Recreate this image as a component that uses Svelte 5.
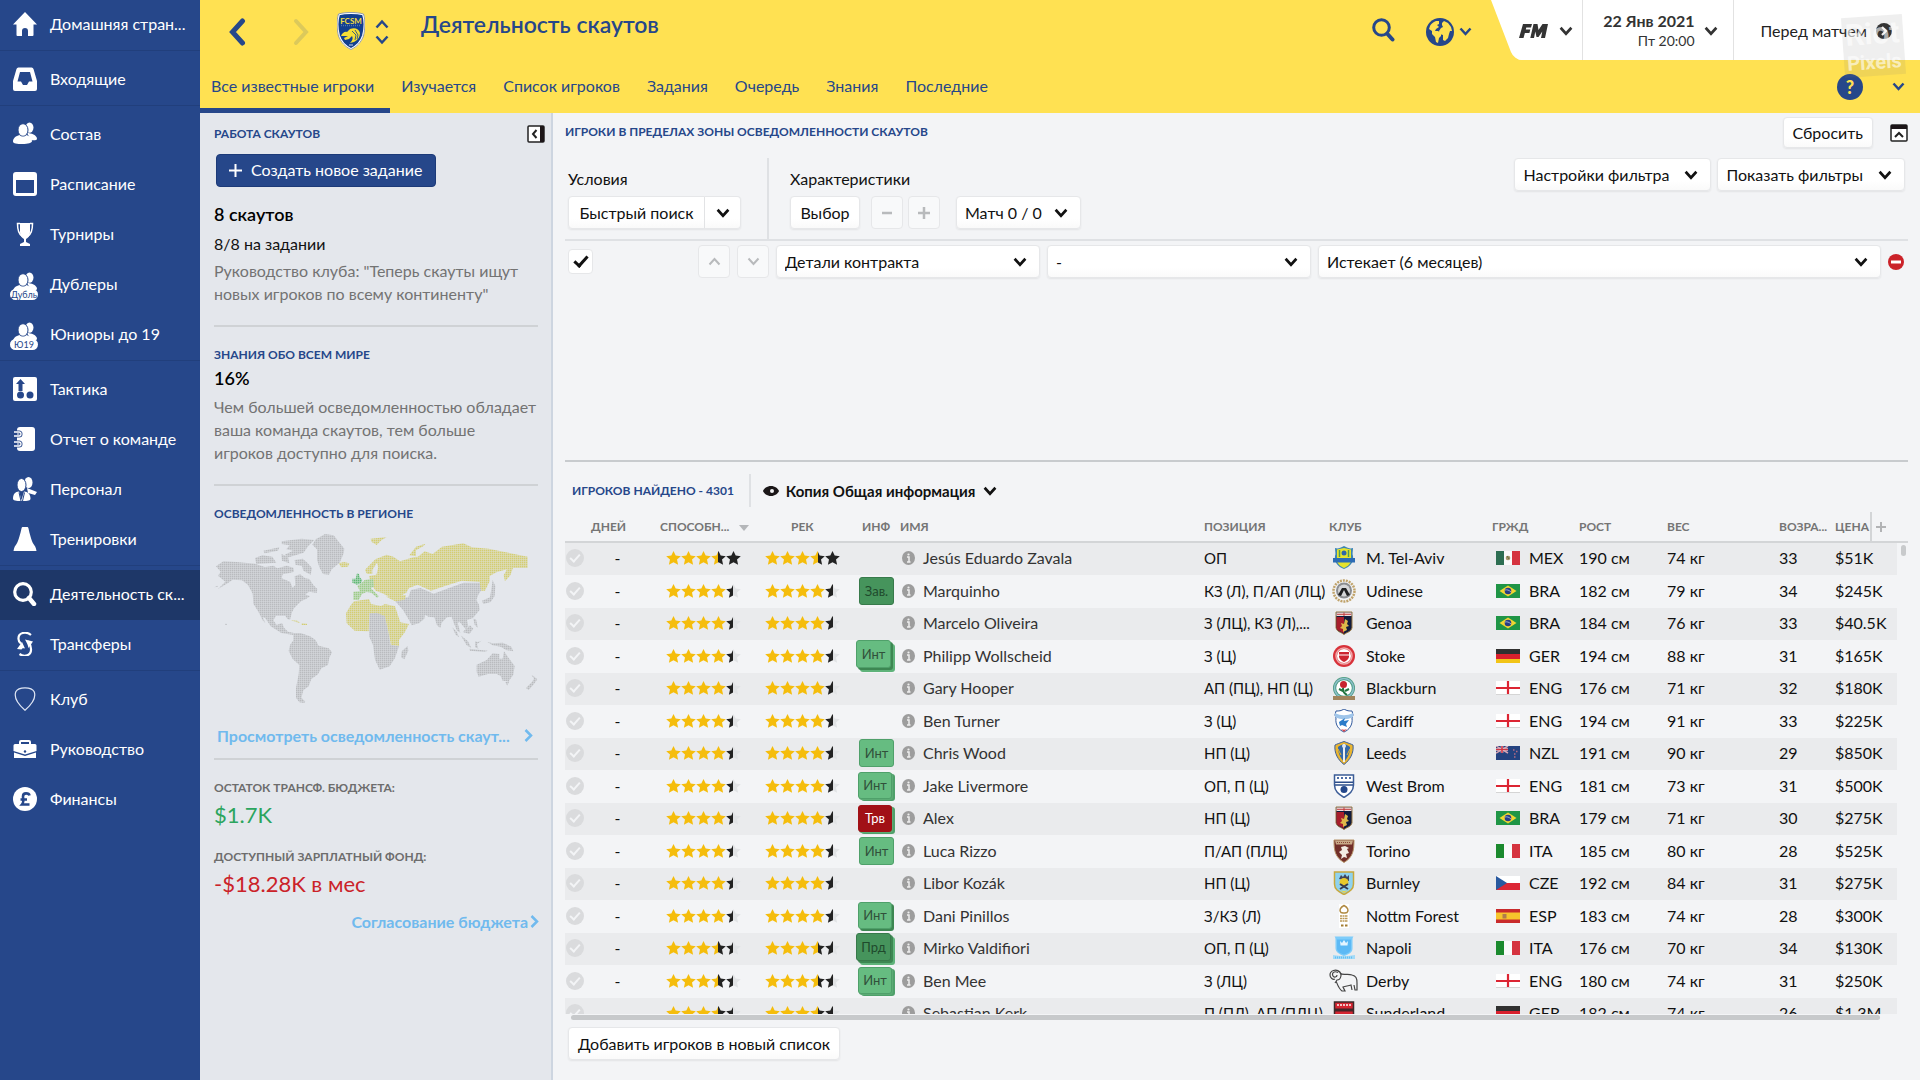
<script>
  const menu = [
    [{ icon: 'home', label: 'Домашняя стран...' }],
    [{ icon: 'inbox', label: 'Входящие' }],
    [
      { icon: 'squad', label: 'Состав' },
      { icon: 'calendar', label: 'Расписание' },
      { icon: 'cup', label: 'Турниры' },
      { icon: 'squad', label: 'Дублеры', tag: 'Дубль' },
      { icon: 'squad', label: 'Юниоры до 19', tag: 'Ю19' }
    ],
    [
      { icon: 'tactics', label: 'Тактика' },
      { icon: 'report', label: 'Отчет о команде' },
      { icon: 'staff', label: 'Персонал' },
      { icon: 'cone', label: 'Тренировки' }
    ],
    [
      { icon: 'search', label: 'Деятельность ск...', active: true },
      { icon: 'transfer', label: 'Трансферы' }
    ],
    [
      { icon: 'shield', label: 'Клуб' },
      { icon: 'case', label: 'Руководство' },
      { icon: 'pound', label: 'Финансы' }
    ]
  ];

  const tabs = ['Все известные игроки', 'Изучается', 'Список игроков', 'Задания', 'Очередь', 'Знания', 'Последние'];
  let tab = $state(tabs[0]);

  const players = [
    { name: 'Jesús Eduardo Zavala', stars: 'a', pos: 'ОП', club: 'M. Tel-Aviv', nat: 'MEX', h: 190, w: 74, age: 33, price: '$51K' },
    { name: 'Marquinho', stars: 'b', tag: 'Зав.', look: 'dark', pos: 'КЗ (Л), П/АП (ЛЦ)', club: 'Udinese', nat: 'BRA', h: 182, w: 79, age: 34, price: '$245K' },
    { name: 'Marcelo Oliveira', stars: 'b', pos: 'З (ЛЦ), КЗ (Л),...', club: 'Genoa', nat: 'BRA', h: 184, w: 76, age: 33, price: '$40.5K' },
    { name: 'Philipp Wollscheid', stars: 'b', tag: 'Инт', look: 'stack3', pos: 'З (Ц)', club: 'Stoke', nat: 'GER', h: 194, w: 88, age: 31, price: '$165K' },
    { name: 'Gary Hooper', stars: 'b', pos: 'АП (ПЦ), НП (Ц)', club: 'Blackburn', nat: 'ENG', h: 176, w: 71, age: 32, price: '$180K' },
    { name: 'Ben Turner', stars: 'b', pos: 'З (Ц)', club: 'Cardiff', nat: 'ENG', h: 194, w: 91, age: 33, price: '$225K' },
    { name: 'Chris Wood', stars: 'b', tag: 'Инт', look: '', pos: 'НП (Ц)', club: 'Leeds', nat: 'NZL', h: 191, w: 90, age: 29, price: '$850K' },
    { name: 'Jake Livermore', stars: 'b', tag: 'Инт', look: 'stack2', pos: 'ОП, П (Ц)', club: 'West Brom', nat: 'ENG', h: 181, w: 73, age: 31, price: '$500K' },
    { name: 'Alex', stars: 'b', tag: 'Трв', look: 'red stack2', pos: 'НП (Ц)', club: 'Genoa', nat: 'BRA', h: 179, w: 71, age: 30, price: '$275K' },
    { name: 'Luca Rizzo', stars: 'b', tag: 'Инт', look: '', pos: 'П/АП (ПЛЦ)', club: 'Torino', nat: 'ITA', h: 185, w: 80, age: 28, price: '$525K' },
    { name: 'Libor Kozák', stars: 'b', pos: 'НП (Ц)', club: 'Burnley', nat: 'CZE', h: 192, w: 84, age: 31, price: '$275K' },
    { name: 'Dani Pinillos', stars: 'b', tag: 'Инт', look: 'stack2d', pos: 'З/КЗ (Л)', club: 'Nottm Forest', nat: 'ESP', h: 183, w: 74, age: 28, price: '$300K' },
    { name: 'Mirko Valdifiori', stars: 'c', tag: 'Прд', look: 'dark stack3', pos: 'ОП, П (Ц)', club: 'Napoli', nat: 'ITA', h: 176, w: 70, age: 34, price: '$130K' },
    { name: 'Ben Mee', stars: 'c', tag: 'Инт', look: 'stack2', pos: 'З (ЛЦ)', club: 'Derby', nat: 'ENG', h: 180, w: 74, age: 31, price: '$250K' },
    { name: 'Sebastian Kerk', stars: 'c', pos: 'П (ПЛ), АП (ПЛЦ)', club: 'Sunderland', nat: 'GER', h: 182, w: 74, age: 26, price: '$1.3M' }
  ];

  // gold up to the first value, black up to the second, pale after it
  const ratings = { a: [3.5, 5], b: [4, 4.5], c: [3.5, 4.5] };
</script>

{#snippet chevron(w = 13, stroke = 2.5)}
  <svg class="chev" width={w} height={w - 4} viewBox="0 0 13 9" aria-hidden="true">
    <path d="M1.5 1.5 6.5 7l5-5.5" fill="none" stroke="currentColor" stroke-width={stroke} />
  </svg>
{/snippet}

{#snippet people()}
  <ellipse cx="16.5" cy="5.6" rx="4" ry="5.2" />
  <path d="M14 11c4 0 10 2 10 6 0 1.500-4 1.500-6 1z" />
  <ellipse cx="10" cy="8" rx="5" ry="6.300" stroke="#26478a" />
  <path d="M0 19.500c0-3.500 3-5.500 6.500-6.500 2 2 5 2 7 0 3 1 5.500 3 5.500 6 0 2-4 3-9.500 3S0 21.500 0 19.500z" />
{/snippet}

{#snippet menuIcon(name)}
  <svg width="24" height="24" viewBox="0 0 24 24" fill="#fff" aria-hidden="true">
    {#if name === 'home'}
      <path d="M12 0 24 12.500h-3.500V23a1 1 0 0 1-1 1H15v-5a3 3 0 0 0-6 0v5H4.500a1 1 0 0 1-1-1V12.500H0z" />
    {:else if name === 'inbox'}
      <path fill-rule="evenodd" d="M5.500.5h13a2 2 0 0 1 2 1.500L24 14v8a2 2 0 0 1-2 2H2a2 2 0 0 1-2-2v-8L3.500 2a2 2 0 0 1 2-1.500zM7 5 4.500 14.500H8l2 3.500h4l2-3.500h3.500L17 5z" />
    {:else if name === 'squad'}
      {@render people()}
    {:else if name === 'calendar'}
      <path fill-rule="evenodd" d="M3 0h18a3 3 0 0 1 3 3v18a3 3 0 0 1-3 3H3a3 3 0 0 1-3-3V3a3 3 0 0 1 3-3zm0 8v13h18V8z" />
    {:else if name === 'cup'}
      <path d="M7 1h10v9c0 4-2 6-4 7v3l4 2v2H7v-2l4-2v-3c-2-1-4-3-4-7z" />
      <path d="M7 1.500H4.500C4.500 8 5.500 12 9 14M17 1.500h2.500C19.500 8 18.500 12 15 14" fill="none" stroke="#fff" stroke-width="1.500" />
    {:else if name === 'tactics'}
      <rect width="24" height="24" rx="2" />
      <path d="M7.500 2 12 7H9.500v7h-4V7H3z" fill="#26478a" />
      <circle cx="7.500" cy="18" r="3.500" fill="#26478a" /><circle cx="17" cy="18" r="3.500" fill="#26478a" />
    {:else if name === 'report'}
      <path d="M7 0h12a3 3 0 0 1 3 3v18a3 3 0 0 1-3 3H7c-2 0-3-1-3-3V3c0-2 1-3 3-3z" />
      <path d="M1 5h5a1 1 0 0 1 0 4H1M1 15h5a1 1 0 0 1 0 4H1" stroke="#26478a" stroke-width="3" fill="none" />
      <path d="M1 5h5a1 1 0 0 1 0 4H1M1 15h5a1 1 0 0 1 0 4H1" stroke="#fff" stroke-width="1.300" fill="none" />
    {:else if name === 'staff'}
      <ellipse cx="15.500" cy="5.500" rx="4" ry="5.500" />
      <path d="m14 11 10 4-2 3-7-2z" />
      <ellipse cx="8.500" cy="8" rx="4.500" ry="6.500" stroke="#26478a" />
      <path d="M6 14.500 8.500 23 11 14.500c4 0 6.500 3 6.500 7 0 2-2 2.500-8.500 2.500S0 23.500 0 21.500c0-4 2-7 6-7z" />
      <path d="M6 15.500 8 24M11.500 15.500 9.500 24" stroke="#26478a" />
    {:else if name === 'cone'}
      <path d="M10 0h4c1 0 1.300.5 1.500 1.500C16.500 6 18.500 14 20.500 17c1 1.500 2.500 3 3 7H.5c.5-4 2-5.500 3-7 2-3 4-11 5-15.500C8.700.5 9 0 10 0z" />
    {:else if name === 'search'}
      <circle cx="10" cy="10" r="8.300" fill="none" stroke="#fff" stroke-width="3.200" />
      <path d="m16 16 5 6" stroke="#fff" stroke-width="4.500" stroke-linecap="round" />
    {:else if name === 'transfer'}
      <g fill="none" stroke="#fff" stroke-width="2.200">
        <path d="M18 3C13-1 5 .5 5.500 7c0 2 1 3.500 2.500 4.500" /><path d="M6.500 22c5 3.500 12 1.500 11.500-5 0-4-2-6-3-8" />
      </g>
      <path d="m4 17 5-7 3 6.500c-2-.5-3 0-3.500 1zM12 7.500l8 2-4.500 6.500c-.5-3-1.500-5-3.500-8.500z" />
    {:else if name === 'shield'}
      <path d="M12 .8c5 0 8 1.500 9.200 4C23.500 11 18 18 12 23.200 6 18 .5 11 2.800 4.800 4 2.300 7 .8 12 .8z" fill="none" stroke="#dfe6f4" stroke-width="1.200" />
    {:else if name === 'case'}
      <path fill-rule="evenodd" d="M8 3h8a2 2 0 0 1 2 2v2h4a1.500 1.500 0 0 1 1.500 1.500V14L12 17.500.5 14V8.500A1.500 1.500 0 0 1 2 7h4V5a2 2 0 0 1 2-2zm0 2v2h8V5z" />
      <path d="M1 15.500 12 19l11-3.500V21H1z" /><circle cx="12" cy="14.500" r="1.200" fill="#26478a" />
    {:else if name === 'pound'}
      <circle cx="12" cy="12" r="12" />
      <path d="M16.500 8.500C16 6 10 5 10 9.500c0 3 1.500 5-1 8h7.500M7.500 12.500H14" fill="none" stroke="#26478a" stroke-width="2.600" />
    {/if}
  </svg>
{/snippet}

{#snippet stars(kind)}
  <svg width="75" height="14" viewBox="0 0 75 14" role="img" aria-label="{ratings[kind][0]} из 5">
    {#each [0, 1, 2, 3, 4] as n}
      <path transform="translate({n * 15} 0)" fill="url(#rate-{kind}-{n})" d="M7.500 0l2.200 4.600 5.100.6-3.800 3.400 1.100 5.200-4.600-2.600-4.600 2.600 1.100-5.200L.2 5.200l5.100-.6z" />
    {/each}
  </svg>
{/snippet}

{#snippet crest(club)}
  <svg width="30" height="24" viewBox="0 0 30 24" aria-hidden="true">
    {#if club === 'M. Tel-Aviv'}
      <path d="M6 2c3 1 5 0 9-2 4 2 6 3 9 2 0 3-1 6 0 8 1 6-3 11-9 13C9 21 5 16 6 10c1-2 0-5 0-8z" fill="#3b84b4" />
      <path d="M8 3.500 15 2l7 1.500V15c-1 4-4 5.500-7 7-3-1.500-6-3-7-7z" fill="#e6e32d" />
      <path d="M10.500 4v7M19.500 4v7" stroke="#4b9a58" stroke-width="1.500" /><circle cx="15" cy="7" r="2.500" fill="#2d67a8" />
      <path d="M4 12h22v4.500H4z" fill="#2c6cb5" />
    {:else if club === 'Udinese'}
      <circle cx="15" cy="12" r="10.500" fill="none" stroke="#c0a36b" stroke-width="2.500" stroke-dasharray="2 1" />
      <circle cx="15" cy="11.500" r="8" fill="#8b8d90" /><circle cx="15" cy="11.500" r="6" fill="#d5d6d8" />
      <path d="m9 16 4-7h4l4 7-3 1-3-6-3 6z" fill="#1f2022" />
    {:else if club === 'Genoa'}
      <path d="M7 1h16v16c-1 4-5 4-8 6.500C12 21 8 21 7 17z" fill="#111c3d" stroke="#9c7b45" />
      <path d="M7.500 6H15v16.500C12 20 8 20 7.500 17z" fill="#a81e2b" /><path d="M7.500 1.500h15V5h-15z" fill="#efdede" />
      <path d="M8 3.300h14M15 1.500V5" stroke="#c43a3a" />
      <path d="m16 8 3 2-1 3 2 2-3 1 1 3-4 2v-3l-3-1 2-2-1-3 3 1z" fill="#dfb94a" />
    {:else if club === 'Stoke'}
      <circle cx="15" cy="12" r="11" fill="#d8323a" /><circle cx="15" cy="12" r="8" fill="none" stroke="#f0a9aa" stroke-width="1.500" />
      <circle cx="15" cy="12" r="7" fill="#fff" /><path d="M10 8h10v5c-1 3-3 4-5 5-2-1-4-2-5-5z" fill="#cd2530" /><path d="M10 11h10" stroke="#fff" />
    {:else if club === 'Blackburn'}
      <circle cx="15" cy="12" r="11" fill="#4a9b7f" /><circle cx="15" cy="12" r="9.500" fill="none" stroke="#8fc0ce" stroke-width="1.500" />
      <circle cx="15" cy="12" r="7.800" fill="#fff" /><circle cx="14.500" cy="8.500" r="3.500" fill="#c9242f" />
      <path d="M14 12c0 4 1 5 4 7M16 15l4-2M14 15l-4-2" stroke="#22763f" stroke-width="2" fill="none" /><path d="M4 20h22v4H4z" fill="#a1855c" />
    {:else if club === 'Cardiff'}
      <path d="M7 2c3 0 5 0 8-2 3 2 5 2 8 2l1 4-1 3c1 7-3 12-8 14C10 21 6 16 7 9L6 6z" fill="#fff" stroke="#31599d" />
      <path d="M6 4c6 3 12 3 18 0v4c-6 3-12 3-18 0z" fill="#9fc5ea" /><path d="m10 13 6-4-1 3 5-1-3 4 1 3-5-2-2 1z" fill="#2b7cc9" />
      <path d="M12 20c2 1 4 1 6 0l-3 3z" fill="#d14a52" />
    {:else if club === 'Leeds'}
      <path d="M15 .5C19 2 22 3 24 4c1 8-3 15-9 19.500C9 19 5 12 6 4c2-1 5-2 9-3.500z" fill="#eab52f" stroke="#3e5f96" />
      <path d="M15 3c3 1 5 2 6 3 0 6-2 10-6 15C11 16 9 12 9 6c1-1 3-2 6-3z" fill="#3468a9" />
      <path d="M15 3v18" stroke="#eee" stroke-width="2" /><circle cx="15" cy="5" r="2" fill="#dbe7f5" /><path d="m9 8 3 6M21 8l-3 6" stroke="#eab52f" />
    {:else if club === 'West Brom'}
      <path d="M5.500 1h19v10c0 6-4 9-9.500 12.500C9.500 20 5.500 17 5.500 11z" fill="#fff" stroke="#3b5c97" stroke-width="1.500" />
      <path d="M8 4h14" stroke="#4c6da7" stroke-width="2" stroke-dasharray="2 2" /><path d="M6 8.300h18M6 11h18" stroke="#2e4f8b" stroke-width="1.500" /><circle cx="15" cy="15.500" r="3.500" fill="#25488b" />
    {:else if club === 'Torino'}
      <path d="M5 1h20c0 11-1 17-10 22.500C6 18 5 12 5 1z" fill="#722f2a" stroke="#b79468" /><path d="M6 1.500h18l-1 4H7z" fill="#c8a987" /><path d="M8 3.500h14" stroke="#8b4639" stroke-dasharray="1 1" />
      <path d="m12 8 4-1 4 2-2 1 2 4-3 1 1 4-3-1-3 2 1-4-3-3 3-2z" fill="#f3ece4" />
    {:else if club === 'Burnley'}
      <path d="M5.500 1h19v12c0 6-5 8-9.500 10.500C10.500 21 5.500 19 5.500 13z" fill="#8ed2ef" stroke="#c8a83c" stroke-width="1.500" />
      <path d="m10 8 2-4 2 2 2-3 2 3 2-2v6z" fill="#40455c" /><circle cx="15" cy="11.500" r="4.500" fill="#e8ca2b" />
      <path d="m11 13 8 5m0-5-8 5" stroke="#333c55" stroke-width="2" /><path d="M8 17c4 4 10 4 14 0l-7 5z" fill="#e7d34b" />
    {:else if club === 'Nottm Forest'}
      <path d="M10 0h10v24H10z" fill="#fff" /><path d="M15 1.500c4 2 5 5 3 7l-2 .5h-2l-2-.5c-2-2-1-5 3-7z" fill="none" stroke="#b08a42" stroke-width="1.500" />
      <path d="M11 12h8M11 14.500h8M11 17h8" stroke="#ba9856" stroke-width="1.500" stroke-dasharray="2 .5" /><path d="M12 21.500h2.500m1.500 0h2.500" stroke="#a37d32" stroke-width="2" />
    {:else if club === 'Napoli'}
      <path d="M5.500.5h19c-1 1-1 2-1 4v8c0 4-4 6-8.500 7.500C10.500 18.500 6.500 16 6.500 12V4.500c0-2 0-3-1-4z" fill="#7dccfa" />
      <path d="M8 3.500h14v9c0 3-3 5-7 6-4-1-7-3-7-6z" fill="#5cb9f5" /><path d="M11.500 9.500 11 5l2 2 2-3 2 3 2-2-.5 4.500z" fill="#e5f5ff" />
      <path d="M4 19c7 1.500 15 1.500 22 0v4H4z" fill="#a2daf8" /><path d="M6 21.500h18" stroke="#63bff3" stroke-width="2" stroke-dasharray="1 1" />
    {:else if club === 'Derby'}
      <g fill="none" stroke="#444" stroke-width="1.200">
        <path d="M11 3C7-.5 1 1.500 1 6c0 3 3 5 5 4M9 3.500C5 1.500 2.500 4 4 7c1 2 4 1 4-1M9 2c5 2 3 9-1 9l-2 3M11 4c3 3 7 0 12 2 4 1 5 3 5 8v7h-2l-1-5M7 12c2 5 3 8 6 10h3l-2-4c3-1 5-1 8-2l1 5" />
      </g>
    {:else}
      <path d="M5.500 1h19v14c0 5-4 7-9.500 9-5.500-2-9.500-4-9.500-9z" fill="#d52531" stroke="#3d2929" stroke-width="1.500" />
      <path d="M8 4h14" stroke="#f2c4c4" stroke-width="2" stroke-dasharray="2 1" /><path d="M6 7.500h18v3H6z" fill="#432629" />
    {/if}
  </svg>
{/snippet}

{#snippet flag(code)}
  <svg width="24" height="14" viewBox="0 0 24 14" aria-hidden="true">
    {#if code === 'MEX' || code === 'ITA'}
      <path d="M0 0h24v14H0z" fill="#fafafa" /><path d="M0 0h8v14H0z" fill={code === 'MEX' ? '#2d6e52' : '#1b8a2e'} /><path d="M16 0h8v14h-8z" fill="#d5333f" />
      {#if code === 'MEX'}<circle cx="12" cy="7" r="2.300" fill="#a9966c" /><path d="m11 5 2 3" stroke="#5f7040" />{/if}
    {:else if code === 'BRA'}
      <path d="M0 0h24v14H0z" fill="#1f9546" /><path d="m12 1.500 8.500 5.500-8.500 5.500L3.500 7z" fill="#f1d531" /><circle cx="12" cy="7" r="3.300" fill="#283c86" /><path d="M9 6c2-.5 4 0 6 2" stroke="#c8d4ea" fill="none" stroke-width=".7" />
    {:else if code === 'GER'}
      <path d="M0 0h24v5H0z" fill="#303030" /><path d="M0 5h24v5H0z" fill="#d9202d" /><path d="M0 10h24v4H0z" fill="#f2c417" />
    {:else if code === 'ENG'}
      <path d="M0 0h24v14H0z" fill="#fff" /><path d="M0 7h24M12 0v14" stroke="#dc2533" stroke-width="2.200" /><path d="M0 13.500h24" stroke="#d5d5d5" />
    {:else if code === 'NZL'}
      <path d="M0 0h24v14H0z" fill="#24427f" /><path d="m0 0 12 7M12 0 0 7" stroke="#d8a5b4" stroke-width="1.500" /><path d="M0 3.500h12M6 0v7" stroke="#f0dfe6" stroke-width="2.500" /><path d="M0 3.500h12M6 0v7" stroke="#cf3442" stroke-width="1.600" />
      <path d="M17 4h1.500M20 5.500h1.500M18 8h1.500M18 11h1.500" stroke="#b56c84" stroke-width="1.500" />
    {:else if code === 'CZE'}
      <path d="M0 0h24v7H0z" fill="#fff" /><path d="M0 7h24v7H0z" fill="#dc2735" /><path d="m0 0 11 7-11 7z" fill="#29599f" />
    {:else}
      <path d="M0 0h24v14H0z" fill="#c92b2c" /><path d="M0 3.500h24v7H0z" fill="#f6c52c" /><path d="M6.500 5h4v4.500h-4z" fill="#b07d4b" />
    {/if}
  </svg>
{/snippet}

<svg class="defs" width="0" height="0" aria-hidden="true">
  <defs>
    {#each Object.entries(ratings) as [kind, [gold, black]]}
      {#each [0, 1, 2, 3, 4] as n}
        {@const g = Math.min(1, Math.max(0, gold - n))}
        {@const b = Math.min(1, Math.max(0, black - n))}
        <linearGradient id="rate-{kind}-{n}">
          <stop offset={g} stop-color="#f5bd0c" />
          <stop offset={g} stop-color="#222" />
          <stop offset={b} stop-color="#222" />
          <stop offset={b} stop-color={b < 1 ? '#e1e3e5' : '#222'} />
        </linearGradient>
      {/each}
    {/each}
  </defs>
</svg>

<div class="app">
  <nav class="side" aria-label="Главное меню">
    {#each menu as group}
      <ul>
        {#each group as it}
          <li>
            <a href="#{it.icon}" class:active={it.active}>
              <span class="pic">
                {@render menuIcon(it.icon)}
                {#if it.tag}<span class="tag">{it.tag}</span>{/if}
              </span>
              <span class="text">{it.label}</span>
            </a>
          </li>
        {/each}
      </ul>
    {/each}
  </nav>

  <div class="page">
    <header>
      <div class="top">
        <button class="back" aria-label="Назад">
          <svg width="18" height="28" viewBox="0 0 18 28"><path d="M14.500 3 4.500 14l10 11" fill="none" stroke="currentColor" stroke-width="5" stroke-linecap="round" /></svg>
        </button>
        <button class="fwd" aria-label="Вперед">
          <svg width="18" height="28" viewBox="0 0 18 28"><path d="m4 3 10 11L4 25" fill="none" stroke="currentColor" stroke-width="4" stroke-linecap="round" /></svg>
        </button>
        <svg class="badge" width="28" height="38" viewBox="0 0 28 38" role="img" aria-label="FCSM">
          <path d="M14 1c4 0 8 .3 12 1.500 2 6 1.500 15 0 21C24 30 20 34 14 37 8 34 4 30 2 23.500.5 17.500 0 8.500 2 2.500 6 1.300 10 1 14 1z" fill="#123f8f" stroke="#fff" stroke-width="1.800" />
          <path d="M14 .5c4 0 8 .3 12.500 1.500 2 6 1.500 16 0 22C24 30.500 20 34.500 14 37.500 8 34.500 4 30.500 1.500 24-.1 18-.5 8 1.500 2 6 .8 10 .5 14 .5z" fill="none" stroke="#4c5d80" stroke-width=".6" />
          <text x="14" y="11.500" text-anchor="middle" font-size="8" font-weight="700" fill="#f5dc3c">FCSM</text>
          <path d="M4 13.500h20" stroke="#4d73af" stroke-width="1.500" stroke-dasharray="1 1" />
          <path d="M4 24c1-3 4-5 6-4l3-3c5-2 9 0 10 4 0 4-2 7-6 9l-4 1c3-3 3-5 2-7l-3 3-4 1-1-2 4-2z" fill="#f6de35" />
          <path d="m15 19 4 4-1 5M18 18l3 5-1 4" stroke="#123f8f" fill="none" stroke-width=".8" /><path d="M12 33h4" stroke="#c7d4e9" />
        </svg>
        <button class="step" aria-label="Сменить команду">
          <svg width="14" height="26" viewBox="0 0 14 26"><path d="m1.500 8.500 5.500-6 5.500 6M1.500 17.500l5.500 6 5.500-6" fill="none" stroke="currentColor" stroke-width="2.500" /></svg>
        </button>
        <h1>Деятельность скаутов</h1>
        <button class="find" aria-label="Поиск">
          <svg width="23" height="24" viewBox="0 0 23 24"><circle cx="9.500" cy="9.500" r="7.800" fill="none" stroke="currentColor" stroke-width="3" /><path d="m15.500 16 5 5.500" stroke="currentColor" stroke-width="4" stroke-linecap="round" /></svg>
        </button>
        <button class="world" aria-label="Мир">
          <svg width="28" height="28" viewBox="0 0 28 28">
            <circle cx="14" cy="14" r="14" fill="#26478a" />
            <path d="M4 8c1-2 3-4 6-5l3 0 0 3-2 1 2 2-3 2-1 2 3 0 3 2 0 3-2 2-1 5-2-1-1-5-3-3 0-3-3-2zM16 5l2-2 4 2 3 4 1 4-2 0-1 3-1 4-3 3-2-1 0-5-3-1-1-3 2-3 2-1-1-2z" fill="#ffe152" />
          </svg>
          {@render chevron(13, 2.5)}
        </button>
        <div class="clock">
          <button class="fm" aria-label="FM">
            <svg width="30" height="14" viewBox="0 0 30 14" fill="#333"><path d="M4 0h9l-1 3.500H7.300L6.800 5.500h4.500L10.400 9H5.900L4.500 14H0zM14.500 0h4l1 6 4-6h5.500l-3 14H22l1.300-6.500L19.500 13h-2l-1.200-5.500L15 14h-3.700z" /></svg>
            {@render chevron(14, 2.5)}
          </button>
          <button class="date">
            <span><b>22 Янв 2021</b><small>Пт 20:00</small></span>
            {@render chevron(14, 2.5)}
          </button>
          <button class="next">
            Перед матчем
            <svg width="16" height="16" viewBox="0 0 16 16" aria-hidden="true"><circle cx="8" cy="8" r="8" fill="#2b2b2b" /><path d="m6 4 4 4-4 4" fill="none" stroke="#fff" stroke-width="2.200" /></svg>
          </button>
        </div>
      </div>
      <div class="tabs">
        {#each tabs as t}
          <button class:on={t === tab} onclick={() => (tab = t)}>{t}</button>
        {/each}
        <button class="help" aria-label="Справка">?</button>
        <button class="more" aria-label="Еще">{@render chevron(13, 2.5)}</button>
      </div>
      <div class="mark" aria-hidden="true">Riot<small>Pixels</small></div>
    </header>

    <div class="body">
      <aside>
        <div class="bar">
          <h2>Работа скаутов</h2>
          <button aria-label="Свернуть панель">
            <svg width="18" height="18" viewBox="0 0 18 18"><rect x="1" y="1" width="16" height="16" rx="1" fill="#fff" stroke="#222" stroke-width="1.500" /><path d="M13 1h4v16h-4z" fill="#1c1518" /><path d="M9.500 5 6 9l3.500 4" fill="none" stroke="#222" stroke-width="2" /></svg>
          </button>
        </div>
        <button class="create"><svg width="13" height="13" viewBox="0 0 13 13" aria-hidden="true"><path d="M6.500 0v13M0 6.500h13" stroke="#fff" stroke-width="2" /></svg>Создать новое задание</button>
        <h3>8 скаутов</h3>
        <p class="busy">8/8 на задании</p>
        <p>Руководство клуба: "Теперь скауты ищут новых игроков по всему континенту"</p>
        <hr />
        <h2>Знания обо всем мире</h2>
        <h3 class="world-part">16%</h3>
        <p>Чем большей осведомленностью обладает ваша команда скаутов, тем больше игроков доступно для поиска.</p>
        <hr />
        <h2>Осведомленность в регионе</h2>
        <svg class="map" viewBox="42 105 972 512" role="img" aria-label="Карта осведомленности">
          <defs>
            <pattern id="mesh" width="6" height="6" patternUnits="userSpaceOnUse"><path d="M0 5h6M5 0v6" stroke="#e4e7ec" stroke-width="2" /></pattern>
          </defs>
          <g fill="#b9bbbe">
            <path d="M48 205 70 190l40 2 55 5 30 10 25-4 12 8 28-8 20 6 2 12-14 4-20 4-3 12 25 10 8 18 8-8-2-26 16-6 16 12 12 2 12 18 12 12-2 12-22-4-12 8 14 6-12 8-14 6-10 10-12 12-6 12-6 22-8-2-6-10-28 0-8 14 10 14 16-6 6 14 12 12 18 4-2 6-36-6-32-20-16-24-8-4 8 18-8-8-12-24-16-26-2-30-14-26-18-14-28-2-14 10-30 18 22-22-22-18 8-12z" />
            <path d="m165 180 22-8 30 4 12 18-60 4zM190 158l48-10-4 10-40 8zM245 130l60-8 38 4-20 20-12 18-45 14-12-8 25-12-20-4 10-12-24-4zM244 168l20 8 4 20-22-8zM284 186l24-4 14 12 14 16-4 20-22-12-4-14-20-4zM42 268l12-5v3zM75 377h5v4h-5z" />
            <path d="m337 140 10-16 14-8 14-8 26 4 14 18 18 22-2 14-12 28-24 20-8 16-18-2-10-18-8-24 0-32z" />
            <path d="M280 405h22l28 10 16 10 10 18 30 8 10 12-8 16-4 22-20 10-10 18-20 14-8 22-16 12-6 22 12 12-4 4-14-2-10-14 0-30 8-40 2-28-20-18-12-24 4-18 10-14z" />
            <path d="m508 345 22-4 24 9 10 45 8 45 25 5-12 35-16 25-30 10-14-30-6-44-12-26zM605 460l18-16 2 14-12 26-10-6z" />
            <path d="m585 308 14-8 26-2 8-22 28-6 40 17 40-15 50-18 58 0 0 14-14 22-6 16 8 14 2 16-20 24-18 6 4 18-8 10-6-8-12-14-6 2 8 30-10-6-10-24-6-18-14 2-16 16-4 16-10-8-8-24-18-2-10-6-2 12-16 14-22 6-8-16-18-30z" />
            <path d="m878 246 8 18-2 30-12 18-22 6-4-10 24-10 4-24zM757 388l14 14 6 16-10-8zM782 412l22 18 10 20-14-8zM788 402l22-20 10 10-12 16zM820 362l8 2 6 26-10-10zM808 452l34 4 22 2-10 4-44-4zM825 430l8 2 12-4-14 10 4 14-10-4zM862 432l16 4 30-2 26 12 6 14-22-4-16-10-24-4z" />
            <path d="m830 500 30-14 18-20 20 2 0 14 10 0 4-22 14 20 18 24-4 26-14 20-18-2-6-14-12-6-26 0-28 8-6-14zM916 552l12-2-6 13zM978 570l18-18 6-10-8-12 6 4 12 10-10 14-16 18z" />
          </g>
          <g fill="#d3cd72">
            <path d="m498 212 14-14 14-14 34-14 20 6 20 14 40-12 14-2 20-16 24 8 28-22 64-10 26 12 50 4 48 10 69 14 0 34-34 0-10 0-8 22-16 18-4-18 10-18-30 8-22 12 0 16-14 28-12 0-4-26-54-4-50 16-42 14-40-18-26 10-8 14-22 12-22 4-28-14-20-8-14-20-6-24 22-4 6-22-4-14-14 22 0 12-16 0-6-12z" />
            <path d="m628 172 20-26 28-9-4 6-24 14 0 18zM512 122l48-5-16 10-14 14-16-10zM416 196l16-4 16 4-4 10-20 2zM272 367l20 1 9 7-10-2zM305 376l16 1v4h-16zM462 310l45-7 6 15 30 6 12-6 30 7 16 48 26 5-12 24-18 24 0 18-24-4-10-50-9-36-24-10-22 2-2 54-42-2-24-22-2-30 14-24zM558 296l60-5-4 14-28 5z" />
          </g>
          <path d="m460 281 20-1-8-16 12-8 10-10 26-4 2 24-10 4 24 24-4 6-18-16-14-2-14 6-10 18-16 0z" fill="#9ccb86" />
          <path d="m457 242 10 0 4-16 6 2 2 10 8 8-4 10-12 4-14-6z" fill="#5db871" />
          <path d="M42 105h972v512H42z" fill="url(#mesh)" opacity=".7" />
        </svg>
        <a class="link" href="#regions"><span class="text">Просмотреть осведомленность скаут...</span><svg width="9" height="13" viewBox="0 0 9 13" aria-hidden="true"><path d="m1.500 1 5.500 5.500L1.500 12" fill="none" stroke="currentColor" stroke-width="2.500" /></svg></a>
        <hr />
        <dl>
          <dt>Остаток трансф. бюджета:</dt>
          <dd>$1.7K</dd>
          <dt>Доступный зарплатный фонд:</dt>
          <dd class="minus">-$18.28K в мес</dd>
        </dl>
        <a class="link right" href="#budget">Согласование бюджета<svg width="9" height="13" viewBox="0 0 9 13" aria-hidden="true"><path d="m1.500 1 5.500 5.500L1.500 12" fill="none" stroke="currentColor" stroke-width="2.500" /></svg></a>
      </aside>

      <main>
        <section class="filter">
          <div class="left">
            <h2>Игроки в пределах зоны осведомленности скаутов</h2>
            <div class="sets">
              <div class="set">
                <span>Условия</span>
                <div class="split"><button class="btn">Быстрый поиск</button><button class="btn" aria-label="Выбрать условие">{@render chevron(14)}</button></div>
              </div>
              <div class="set attrs">
                <span>Характеристики</span>
                <div class="line">
                  <button class="btn pick">Выбор</button>
                  <button class="btn off" aria-label="Меньше" disabled><svg width="12" height="12" viewBox="0 0 12 12"><path d="M1 6h10" stroke="currentColor" stroke-width="2.500" /></svg></button>
                  <button class="btn off" aria-label="Больше" disabled><svg width="12" height="12" viewBox="0 0 12 12"><path d="M0 6h12M6 0v12" stroke="currentColor" stroke-width="2.500" /></svg></button>
                  <label class="select match"><select aria-label="Совпадения"><option>Матч 0 / 0</option></select>{@render chevron(14)}</label>
                </div>
              </div>
            </div>
          </div>
          <div class="tools">
            <div class="line reset">
              <button class="btn">Сбросить</button>
              <button class="plain" aria-label="Свернуть фильтр">
                <svg width="18" height="18" viewBox="0 0 18 18"><rect x="1" y="1" width="16" height="16" rx="1" fill="#fff" stroke="#222" stroke-width="1.500" /><path d="M1 1h16v4H1z" fill="#1c1518" /><path d="m5 13 4-4 4 4" fill="none" stroke="#222" stroke-width="2" /></svg>
              </button>
            </div>
            <div class="line">
              <button class="btn menu-btn" aria-haspopup="menu">Настройки фильтра {@render chevron(14)}</button>
              <button class="btn menu-btn" aria-haspopup="menu">Показать фильтры {@render chevron(14)}</button>
            </div>
          </div>
        </section>

        <section class="rules">
          <div class="rule">
            <input type="checkbox" checked aria-label="Условие включено" />
            <button class="btn off up" aria-label="Выше" disabled>{@render chevron(13, 2)}</button>
            <button class="btn off" aria-label="Ниже" disabled>{@render chevron(13, 2)}</button>
            <label class="select field"><select aria-label="Параметр"><option>Детали контракта</option></select>{@render chevron(14)}</label>
            <label class="select field"><select aria-label="Сравнение"><option>-</option></select>{@render chevron(14)}</label>
            <label class="select wide"><select aria-label="Значение"><option>Истекает (6 месяцев)</option></select>{@render chevron(14)}</label>
            <button class="plain" aria-label="Удалить условие"><svg width="16" height="16" viewBox="0 0 16 16"><circle cx="8" cy="8" r="8" fill="#cb2229" /><path d="M3 8h10" stroke="#fff" stroke-width="3" /></svg></button>
          </div>
        </section>

        <div class="found">
          <h2>Игроков найдено - 4301</h2>
          <label class="view">
            <svg width="16" height="12" viewBox="0 0 16 12" aria-hidden="true"><path fill-rule="evenodd" d="M8 1c4 0 7 2.500 8 5-1 2.500-4 5-8 5S1 8.500 0 6c1-2.500 4-5 8-5zm1 3a2 2 0 1 0 0 4 2 2 0 0 0 0-4z" fill="#1b1718" /></svg>
            <select aria-label="Вид таблицы"><option>Копия Общая информация</option></select>
            {@render chevron(14)}
          </label>
        </div>

        <div class="list">
          <div class="clip">
            <table>
              <colgroup>
                <col class="c-check" /><col class="c-days" /><col class="c-abil" /><col class="c-rec" /><col class="c-inf" /><col />
                <col class="c-pos" /><col class="c-club" /><col class="c-nat" /><col class="c-h" /><col class="c-w" /><col class="c-age" /><col class="c-price" />
              </colgroup>
              <thead>
                <tr>
                  <th aria-label="Выбрать"></th><th>Дней</th>
                  <th class="abil">Способн...<svg width="10" height="6" viewBox="0 0 10 6" aria-hidden="true"><path d="M0 0h10L5 6z" fill="#b4b6b9" /></svg></th>
                  <th class="rec">Рек</th><th class="inf">Инф</th><th>Имя</th><th>Позиция</th><th>Клуб</th><th>Гржд</th><th>Рост</th><th>Вес</th><th>Возра...</th>
                  <th><div class="last">Цена<button class="plain" aria-label="Добавить столбец"><svg width="10" height="10" viewBox="0 0 10 10"><path d="M5 0v10M0 5h10" stroke="#b2b3b5" stroke-width="2" /></svg></button></div></th>
                </tr>
              </thead>
              <tbody>
                {#each players as p}
                  <tr>
                    <td><input class="dot" type="checkbox" aria-label="Выбрать {p.name}" /></td>
                    <td class="days">-</td>
                    <td class="s1">{@render stars(p.stars)}</td>
                    <td class="s2">{@render stars(p.stars)}</td>
                    <td>{#if p.tag}<span class="inf-tag {p.look}">{p.tag}</span>{/if}</td>
                    <td>
                      <div class="name">
                        <svg width="13" height="14" viewBox="0 0 13 14" aria-hidden="true"><ellipse cx="6.500" cy="7" rx="6.500" ry="7" fill="#9d9d9d" /><path d="M5 6h2v5m-2 0h3.500" stroke="#eee" stroke-width="1.500" fill="none" /><circle cx="6.500" cy="3.500" r="1.100" fill="#eee" /></svg>
                        {p.name}
                      </div>
                    </td>
                    <td class="pos">{p.pos}</td>
                    <td><div class="pair">{@render crest(p.club)}{p.club}</div></td>
                    <td><div class="pair nat">{@render flag(p.nat)}{p.nat}</div></td>
                    <td>{p.h} см</td>
                    <td>{p.w} кг</td>
                    <td>{p.age}</td>
                    <td>{p.price}</td>
                  </tr>
                {/each}
              </tbody>
            </table>
          </div>
          <div class="vbar"><span></span></div>
        </div>
        <div class="hbar"></div>
        <button class="btn add">Добавить игроков в новый список</button>
      </main>
    </div>
  </div>
</div>

<style>
  :global(body) { margin: 0; }
  .defs { position: absolute; }
  .app {
    display: flex;
    height: 100vh;
    overflow: hidden;
    font-family: Lato, "Noto Sans", sans-serif;
    font-size: 16px;
    line-height: 20px;
    color: #111;
    background: #f3f4f6;
  }
  button, input, select { font: inherit; color: inherit; margin: 0; }
  button { padding: 0; border: 0; background: none; cursor: pointer; }
  h1, h2, h3, p, ul, dl, dd { margin: 0; padding: 0; }
  svg { display: block; flex: none; }
  a { text-decoration: none; }
  .text { white-space: nowrap; }

  .side { width: 200px; flex: none; background: #26478a; }
  .side ul { list-style: none; }
  .side ul + ul { border-top: 1px solid #213f7c; padding-top: 4px; }
  .side a { display: flex; align-items: center; gap: 13px; height: 48px; padding: 0 4px 2px 13px; color: #fff; }
  .side a.active { background: #1e3768; }
  .pic { position: relative; }
  .tag {
    position: absolute; left: -3px; bottom: -4px; width: 28px; height: 11px;
    border-radius: 6px; background: #fff; color: #26478a; font-size: 9px; line-height: 11px; text-align: center;
  }

  .page { flex: 1; min-width: 0; display: flex; flex-direction: column; }
  header { position: relative; height: 113px; flex: none; background: #ffe152; color: #26478a; }
  .top { display: flex; align-items: center; height: 60px; padding-left: 28px; }
  .back, .fwd, .step { margin-top: 4px; }
  .fwd { margin-left: 46px; color: #dcc95b; }
  .badge { margin-left: 27px; margin-top: 2px; }
  .step { margin-left: 10px; }
  h1 { flex: 1; margin-left: 32px; margin-bottom: 12px; font-size: 23px; line-height: 28px; font-weight: 600; }
  .find { margin-right: 31px; }
  .world { display: flex; align-items: center; gap: 5px; margin: 3px 42px 0 0; }
  .clock { position: relative; display: flex; height: 60px; background: #fff; border-bottom-left-radius: 8px; color: #333; }
  .clock::before {
    content: ""; position: absolute; left: -23px; top: 0; width: 50px; height: 60px;
    background: #fff; border-radius: 0 0 0 8px; transform: skewX(21deg); transform-origin: top left;
  }
  .clock button { position: relative; display: flex; align-items: center; }
  .clock .fm { gap: 10px; padding: 2px 9px 0 5px; }
  .clock .date { gap: 9px; padding: 2px 15px 0 20px; border-left: 1px solid #e2e2e2; border-right: 1px solid #e2e2e2; }
  .date span { display: flex; flex-direction: column; text-align: right; }
  .date b { font-weight: 700; }
  .date small { font-size: 14px; }
  .clock .next { gap: 9px; padding: 2px 28px 0 27px; color: #222; }
  .tabs { display: flex; height: 53px; align-items: stretch; }
  .tabs button { padding: 4px 16px 0 11px; border-bottom: 5px solid transparent; }
  .tabs button.on { border-color: #26478a; }
  .tabs .help {
    align-self: center; width: 26px; height: 26px; margin: 0 23px 0 auto; padding: 0; border: 0;
    border-radius: 50%; background: #26478a; color: #ffe152; font-weight: 900; font-size: 18px;
  }
  .tabs .more { padding: 0 15px 0 6px; border: 0; }
  .mark {
    position: absolute; right: 16px; top: 16px; padding: 2px 3px; color: rgba(255, 255, 255, .6);
    background: rgba(120, 120, 120, .12); font: 700 30px/32px Roboto, sans-serif; transform: rotate(-4deg); pointer-events: none;
  }
  .mark small { display: block; font-size: 20px; line-height: 24px; }

  .body { flex: 1; min-height: 0; display: flex; }
  aside { width: 324px; flex: none; padding: 11px 13px 0 14px; background: #e4e7ec; border-right: 2px solid #cdd5e0; }
  h2 { font-size: 12px; line-height: 20px; font-weight: 700; text-transform: uppercase; color: #26478a; }
  .bar { display: flex; justify-content: space-between; align-items: center; margin-right: -7px; }
  .create {
    display: flex; align-items: center; gap: 9px; height: 33px; margin: 10px 0 16px 2px; padding: 0 13px 1px 12px;
    border: 1px solid #1c3a78; border-radius: 4px; background: #26478a; color: #fff;
  }
  h3 { font-size: 18px; line-height: 22px; font-weight: 600; color: #000; }
  h3.world-part { margin: 2px 0 6px; }
  p { line-height: 23px; color: #737373; }
  .busy { margin: 7px 0 4px; color: #111; }
  hr { height: 2px; margin: 20px 0 18px; border: 0; background: #cfd2d5; }
  .map { width: 100%; margin: 9px 0 22px; }
  .link { display: flex; align-items: center; justify-content: space-between; margin: 0 5px 0 3px; color: #70baee; font-weight: 700; }
  aside .link + hr { margin-top: 12px; }
  dt { font-size: 12px; font-weight: 700; text-transform: uppercase; color: #6d6d6d; }
  dd { margin: 3px 0 18px; font-size: 22px; line-height: 28px; color: #2ba55e; }
  dd.minus { margin-bottom: 14px; color: #cb2229; }
  .link.right { justify-content: flex-end; gap: 2px; margin-right: -1px; }

  main { flex: 1; min-width: 0; display: flex; flex-direction: column; padding: 0 12px 0 12px; }
  .btn, .select {
    height: 33px; box-sizing: border-box; border: 1px solid #e6e7e9; border-radius: 4px;
    background: linear-gradient(#fff 70%, #fafafa); box-shadow: 0 1px 2px rgba(0, 0, 0, .07); color: #111; white-space: nowrap;
  }
  .btn { display: flex; align-items: center; justify-content: center; padding: 0 9px; }
  .btn.off { width: 32px; padding: 0; background: #f8f9fa; box-shadow: none; color: #b8babc; }
  .up .chev { transform: rotate(180deg); }
  .select { display: grid; align-items: center; }
  .select > :global(*) { grid-area: 1 / 1; }
  .select select { width: 100%; height: 100%; padding: 0 30px 0 8px; border: 0; background: none; appearance: none; }
  .select .chev { justify-self: end; margin-right: 12px; pointer-events: none; }
  .line { display: flex; align-items: center; }

  .filter { display: flex; justify-content: space-between; border-bottom: 2px solid #dfe1e4; }
  .left { padding-top: 9px; }
  .sets { display: flex; margin-top: 16px; }
  .set { height: 81px; box-sizing: border-box; padding: 11px 26px 0 3px; }
  .set > span { display: block; margin-bottom: 7px; }
  .attrs { padding-left: 21px; border-left: 2px solid #dfe1e4; }
  .split { display: flex; }
  .split .btn:first-child { border-radius: 4px 0 0 4px; width: 137px; }
  .split .btn:last-child { border-radius: 0 4px 4px 0; border-left: 0; width: 36px; }
  .attrs .pick { width: 70px; margin-right: 11px; }
  .attrs .off { margin-right: 5px; }
  .match { width: 125px; margin-left: 11px; }
  .tools { padding-top: 4px; }
  .reset { justify-content: flex-end; gap: 17px; margin-bottom: 10px; }
  .reset .btn { height: 31px; }
  .tools .line:last-child { gap: 6px; margin-right: 3px; }
  .menu-btn { gap: 15px; padding: 0 12px 0 8px; }

  .rules { height: 219px; border-bottom: 2px solid #c8cbce; }
  .rule { display: flex; align-items: center; padding: 4px 4px 0 3px; }
  .rule input {
    appearance: none; display: grid; place-items: center; width: 25px; height: 25px; margin-right: 105px;
    border: 1px solid #e6e7e9; border-radius: 4px; background: #fff;
  }
  .rule input:checked::before {
    content: ""; width: 5px; height: 11px; margin-top: -3px; border: solid #111; border-width: 0 3px 3px 0; transform: rotate(42deg);
  }
  .rule .off { margin-right: 7px; }
  .field { width: 264px; margin-right: 7px; }
  .wide { flex: 1; margin-right: 7px; }

  .found { display: flex; align-items: center; padding: 12px 0 5px 7px; }
  .found h2 { padding-right: 15px; }
  .view { display: flex; align-items: center; gap: 7px; height: 33px; padding-left: 12px; border-left: 2px solid #dfe1e4; }
  .view select { appearance: none; padding: 0; border: 0; background: none; font-size: 15px; font-weight: 700; }

  .list { flex: 1; min-height: 0; display: flex; }
  .clip { flex: 1; min-width: 0; overflow: hidden; }
  .vbar { width: 11px; flex: none; }
  .vbar::before { content: ""; display: block; height: 29px; border-bottom: 2px solid #d3d5d7; }
  .vbar span { display: block; width: 5px; height: 11px; margin: 2px 0 0 4px; border-radius: 3px; background: #c8cacc; }
  table { width: 100%; table-layout: fixed; border-collapse: separate; border-spacing: 0; }
  .c-check { width: 24px; } .c-days { width: 60px; } .c-abil { width: 110px; } .c-rec { width: 96px; } .c-inf { width: 45px; }
  .c-pos { width: 125px; } .c-club { width: 163px; } .c-nat { width: 87px; } .c-h { width: 88px; } .c-w { width: 112px; }
  .c-age { width: 56px; } .c-price { width: 62px; }
  th, td { padding: 0; text-align: left; white-space: nowrap; }
  th { height: 29px; border-bottom: 2px solid #d3d5d7; font-size: 12px; font-weight: 700; text-transform: uppercase; color: #757575; }
  th:nth-child(2) { padding-left: 2px; }
  th.abil { padding-left: 11px; }
  th.abil svg { display: inline-block; margin-left: 10px; }
  th.rec { padding-left: 32px; }
  th.inf { padding-left: 7px; }
  .last { display: flex; align-items: center; height: 29px; }
  .last button { height: 29px; margin-left: auto; padding: 0 11px 0 4px; border-left: 2px solid #d3d5d7; }
  tbody tr { height: 33px; }
  tbody tr:nth-child(odd) { height: 32px; background: #eaebed; }
  td { padding-bottom: 2px; }
  .dot { appearance: none; display: grid; place-items: center; width: 18px; height: 18px; margin-left: 1px; border-radius: 50%; background: #dadbdd; }
  .dot::before { content: ""; width: 4px; height: 8px; margin-top: -2px; border: solid #f3f4f6; border-width: 0 2px 2px 0; transform: rotate(42deg); }
  .days { padding-right: 3px; text-align: center; }
  .s1 { padding-left: 17px; }
  .s2 { padding-left: 6px; }
  .pos { font-size: 15px; }
  .inf-tag {
    display: block; width: 33px; height: 26px; margin-left: 4px; border: 1px solid #4fa06a; border-radius: 3px;
    background: #66bc81; color: #31503b; font-size: 13px; line-height: 26px; text-align: center;
  }
  .dark { background: #46945c; border-color: #387a4b; color: #1f4a2c; }
  .red { background: #a11016; border-color: #a11016; color: #fff; }
  .stack2 { width: 32px; height: 25px; line-height: 25px; margin-left: 3px; box-shadow: 1px 1px 0 #5cab75, 3px 2px 0 #4fa06a; }
  .stack2d { width: 32px; height: 25px; line-height: 25px; margin-left: 3px; box-shadow: 2px 2px 0 #3d8752; }
  .stack3 { margin: -3px 0 0 1px; box-shadow: 2px 2px 0 #3d8752, 4px 4px 0 #5fb37a; }
  .name { display: flex; align-items: center; gap: 8px; padding-left: 2px; color: #333; }
  .pair { display: flex; align-items: center; gap: 7px; }
  .nat { gap: 9px; padding-left: 4px; }
  .hbar { height: 5px; margin: 1px 28px 7px 6px; border-radius: 3px; background: #c7c9cb; }
  .add { align-self: flex-start; margin: 0 0 20px 3px; }
</style>
